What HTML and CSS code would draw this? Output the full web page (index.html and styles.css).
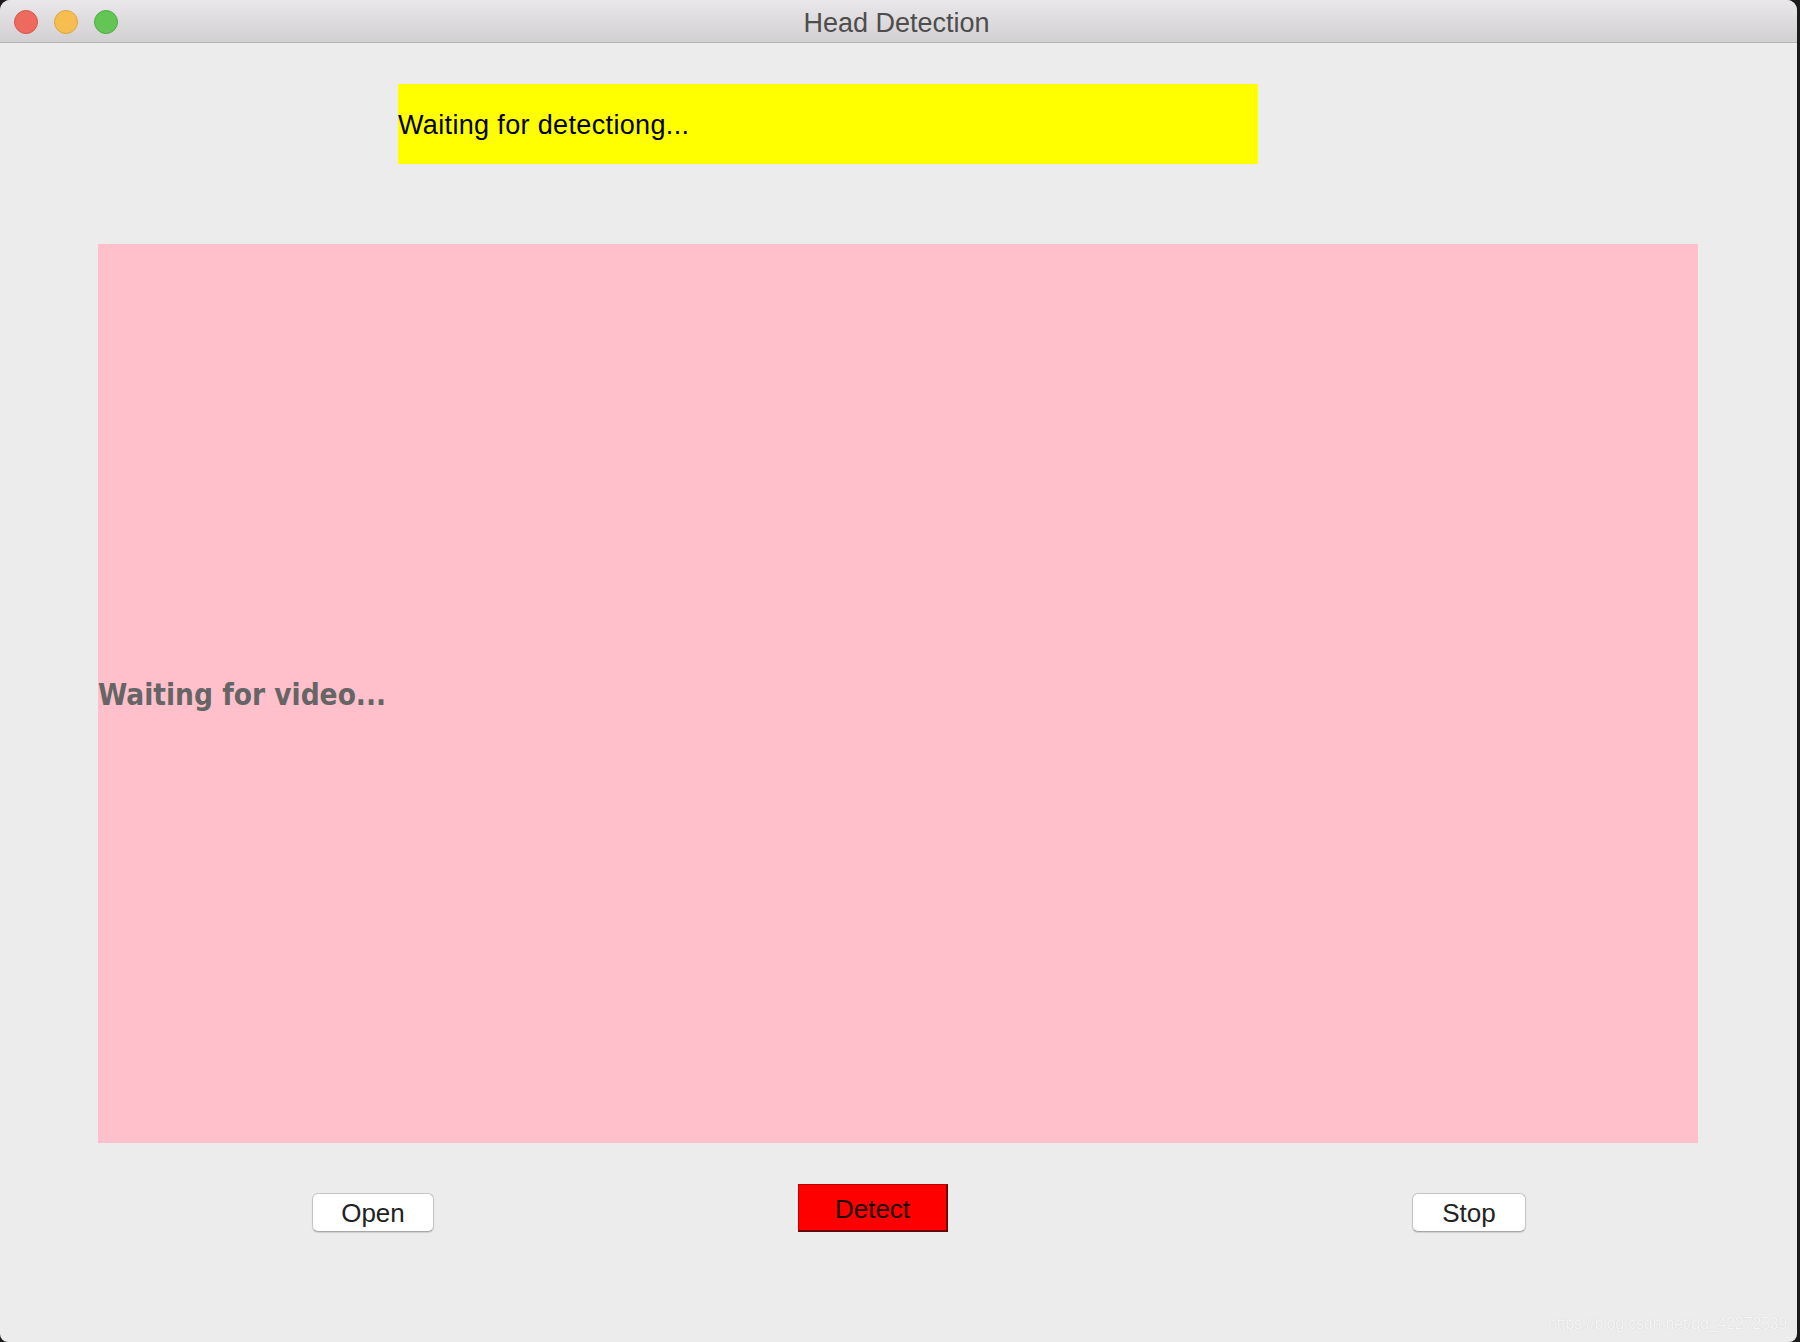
FILE: index.html
```html
<!DOCTYPE html>
<html>
<head>
<meta charset="utf-8">
<title>Head Detection</title>
<link rel="stylesheet" href="styles.css">
</head>
<body>
<div class="window">
  <div class="titlebar">
    <div class="lights">
      <span class="light red"></span>
      <span class="light yellow"></span>
      <span class="light green"></span>
    </div>
    <div class="title">Head Detection</div>
  </div>
  <div class="content">
    <div class="status">Waiting for detectiong...</div>
    <div class="video">Waiting for video...</div>
    <div class="buttons">
      <button class="btn btn-open">Open</button>
      <button class="btn btn-detect">Detect</button>
      <button class="btn btn-stop">Stop</button>
    </div>
  </div>
  <div class="watermark">https://blog.csdn.net/qq_42272539</div>
</div>
</body>
</html>
```
FILE: styles.css
```css
html, body {
  margin: 0;
  padding: 0;
  width: 1800px;
  height: 1342px;
  overflow: hidden;
  background: #1c1c1c;
}

.window {
  position: relative;
  width: 1797px;
  height: 1342px;
  background: #ececec;
  border-radius: 10px 10px 8px 8px;
  overflow: hidden;
  display: flex;
  flex-direction: column;
}

.titlebar {
  position: relative;
  height: 42px;
  border-bottom: 1px solid #b3b3b3;
  background: linear-gradient(#e9e7e9, #d2d0d2);
  display: flex;
  align-items: center;
  justify-content: center;
  flex-shrink: 0;
}

.lights {
  position: absolute;
  left: 14px;
  top: 10px;
  display: flex;
  gap: 16px;
}

.light {
  width: 22px;
  height: 22px;
  border-radius: 50%;
  display: block;
}
.red { background: #ee6a5f; border: 1px solid #d5544c; }
.yellow { background: #f6be50; border: 1px solid #d9a53e; }
.green { background: #62c554; border: 1px solid #53a946; }

.title {
  font-family: "Liberation Sans", Arial, sans-serif;
  font-size: 27px;
  color: #4d4d4d;
  margin-top: 5px;
  margin-left: -4px;
}

.content {
  display: flex;
  flex-direction: column;
  align-items: flex-start;
  padding-top: 41px;
}

.status {
  margin-left: 398px;
  width: 860px;
  height: 80px;
  background: #ffff00;
  display: flex;
  align-items: center;
  font-family: "Liberation Sans", Arial, sans-serif;
  font-size: 27px;
  letter-spacing: 0.35px;
  color: #000;
  padding-top: 2px;
  box-sizing: border-box;
}

.video {
  margin-top: 80px;
  margin-left: 98px;
  width: 1600px;
  height: 899px;
  background: #ffc0cb;
  display: flex;
  align-items: center;
  font-family: "DejaVu Sans Condensed", "DejaVu Sans", sans-serif;
  font-stretch: condensed;
  font-weight: bold;
  font-size: 29.5px;
  color: #656565;
  padding-top: 2px;
  box-sizing: border-box;
}

.buttons {
  margin-top: 41px;
  margin-left: 312px;
  display: flex;
  align-items: flex-start;
}

.btn {
  font-family: "Liberation Sans", Arial, sans-serif;
  font-size: 26px;
  color: #222;
  padding: 2px 0 0 0;
  margin: 0;
  box-sizing: border-box;
  cursor: default;
}

.btn-open, .btn-stop {
  margin-top: 9px;
  height: 39px;
  background: #ffffff;
  border: 1px solid #c4c4c4;
  border-bottom-color: #a8a8a8;
  border-radius: 6px;
  box-shadow: 0 1px 1px rgba(0,0,0,0.12);
}

.btn-open {
  width: 122px;
}

.btn-detect {
  margin-left: 364px;
  width: 150px;
  height: 48px;
  padding-top: 4px;
  background: #ff0000;
  border: 1px solid #c00000;
  border-right: 2px solid #7a0000;
  border-bottom: 2px solid #6a0000;
  color: #1a0000;
}

.btn-stop {
  margin-left: 464px;
  width: 114px;
}

.watermark {
  position: absolute;
  right: 10px;
  bottom: 9px;
  font-family: "Liberation Sans", Arial, sans-serif;
  font-size: 16px;
  color: #f6f6f6;
  text-shadow: 0 0 1px rgba(0,0,0,0.15);
  letter-spacing: -0.2px;
}
```
